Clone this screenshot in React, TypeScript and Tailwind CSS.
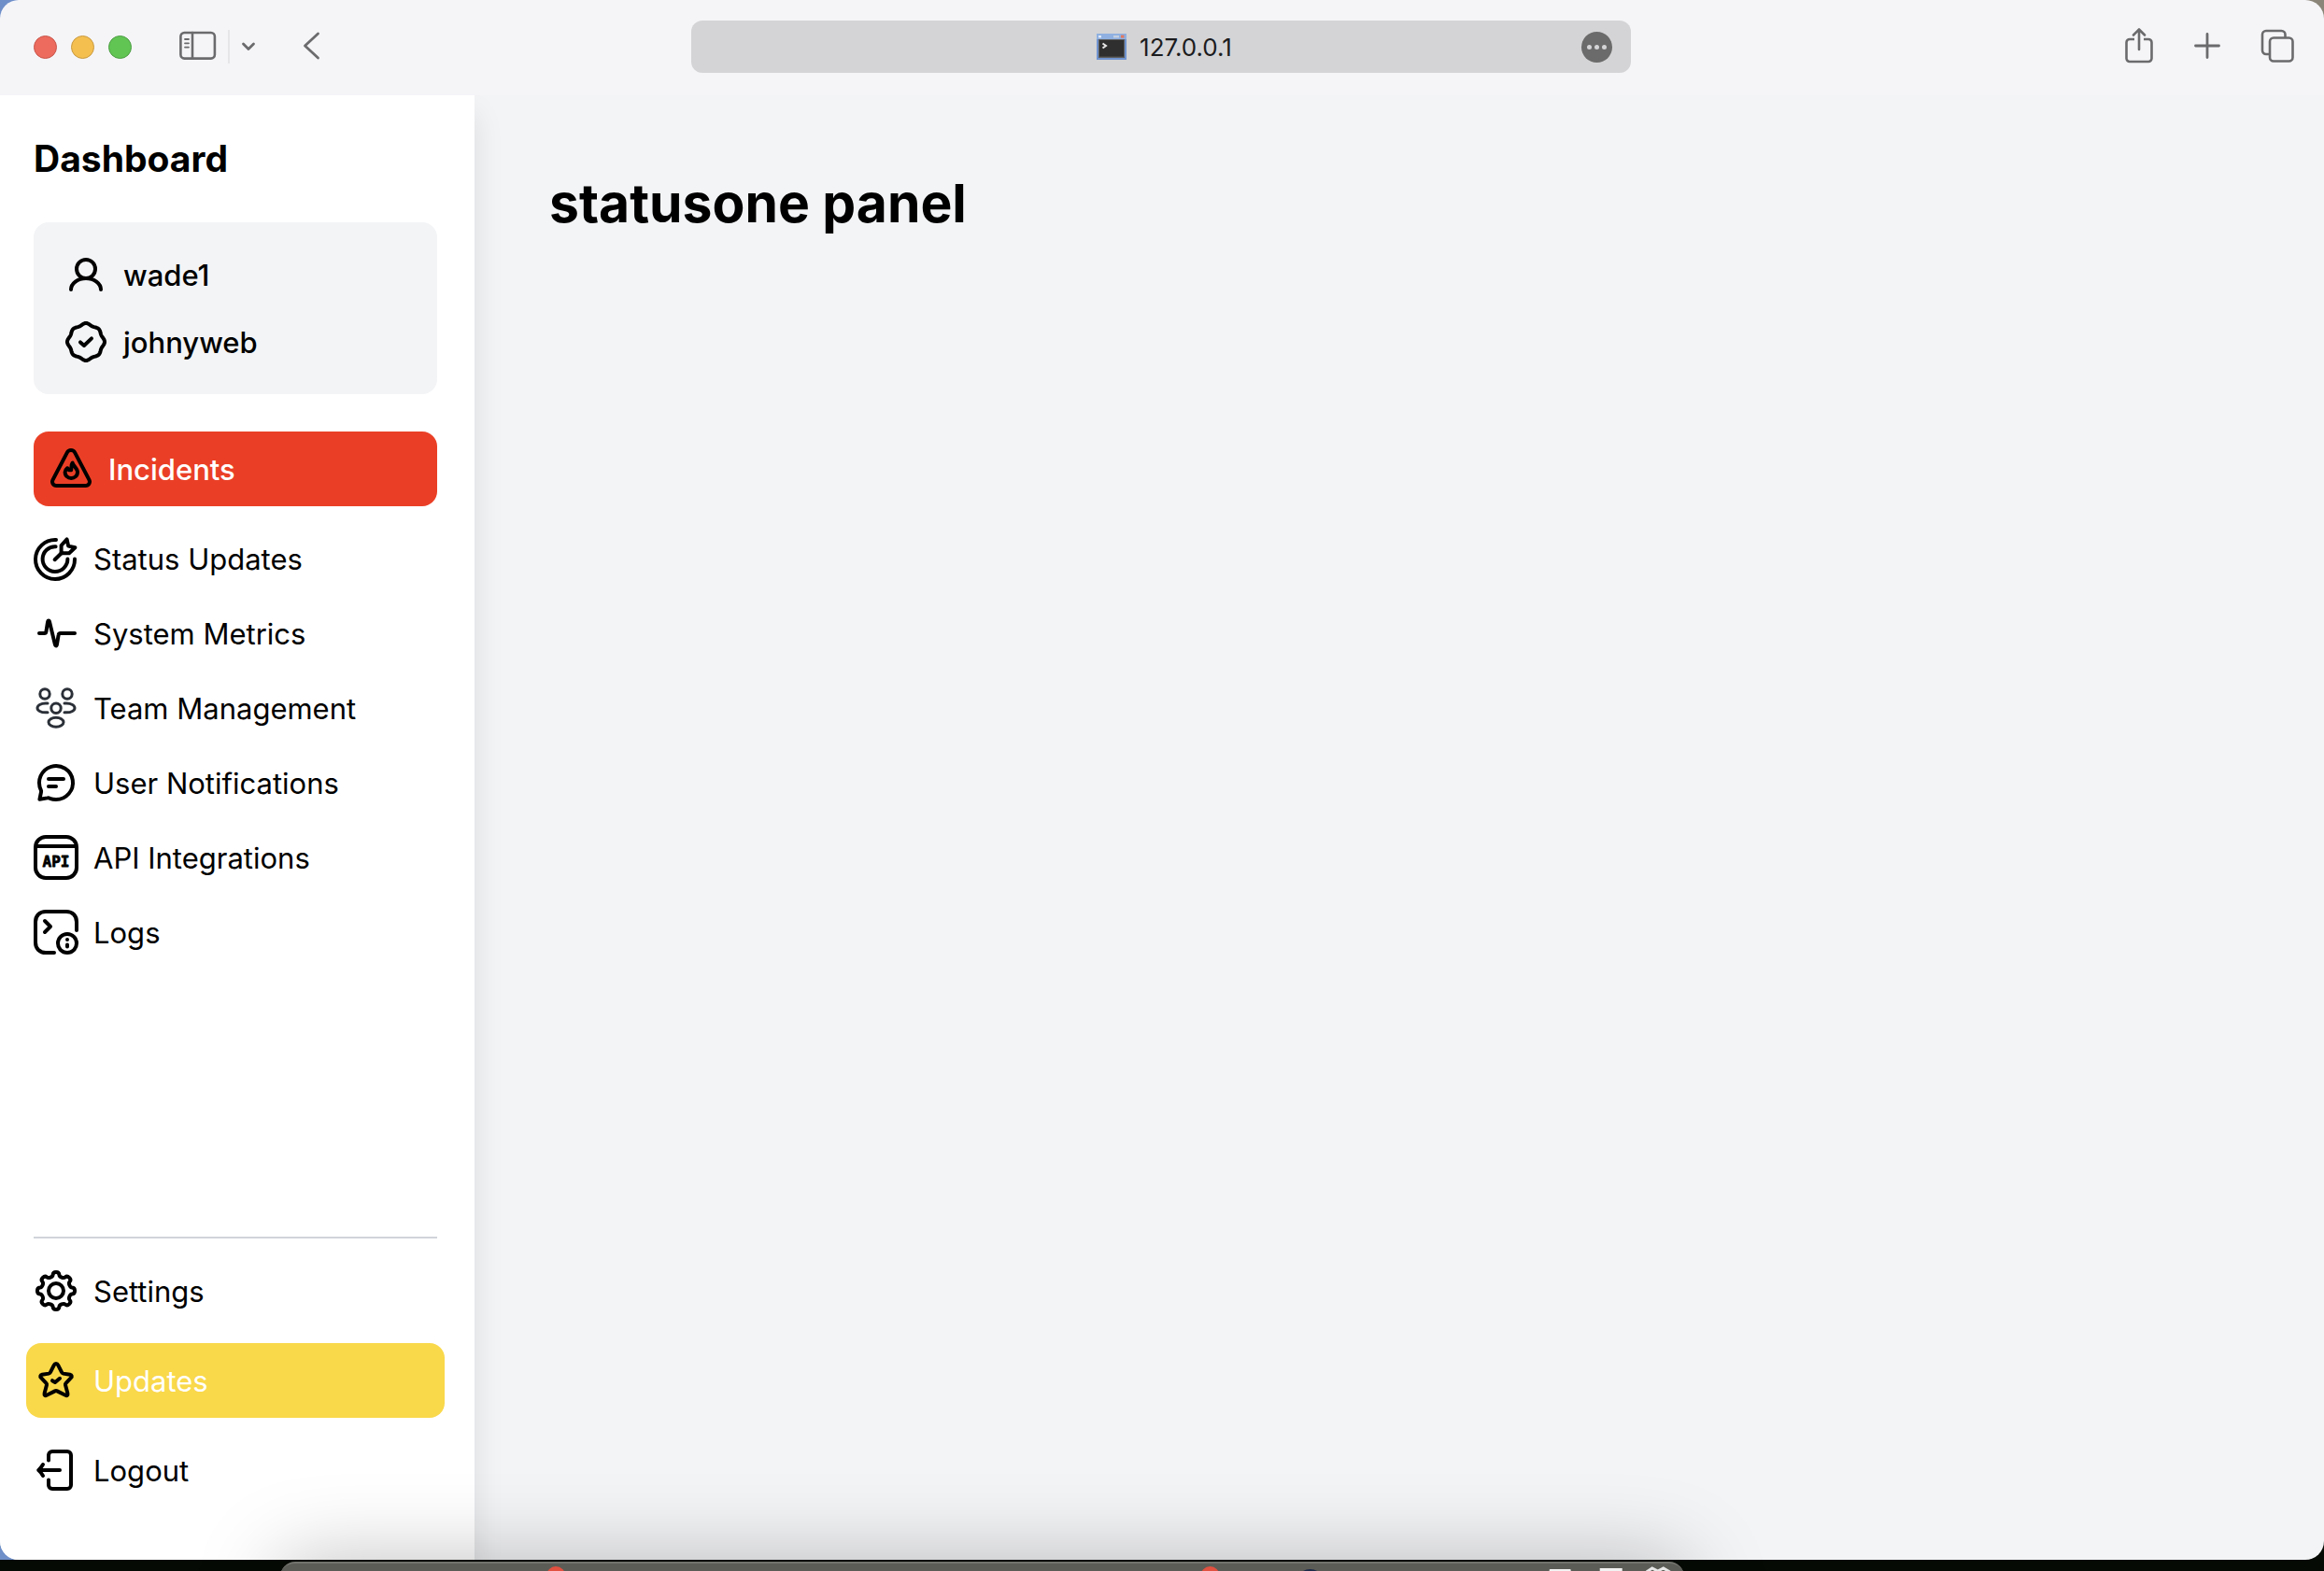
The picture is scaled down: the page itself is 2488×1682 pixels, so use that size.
import type { ReactNode } from "react";

/* ---------- icon helpers ---------- */

function Icon({ children, stroke = 2 }: { children: ReactNode; stroke?: number }) {
  return (
    <svg
      viewBox="0 0 24 24"
      className="size-12 shrink-0 overflow-visible"
      fill="none"
      stroke="currentColor"
      strokeWidth={stroke}
      strokeLinecap="round"
      strokeLinejoin="round"
      aria-hidden="true"
    >
      {children}
    </svg>
  );
}

/** Wavy badge outline with eight lobes around (12, 12). */
function badgePath() {
  const points: string[] = [];
  for (let i = 0; i < 160; i++) {
    const t = (i / 160) * Math.PI * 2;
    const r = 9.4 + 0.45 * Math.cos(8 * t) + 0.15 * Math.cos(4 * t);
    points.push(`${(12 + r * Math.sin(t)).toFixed(2)} ${(12 - r * Math.cos(t)).toFixed(2)}`);
  }
  return `M${points.join("L")}Z`;
}

/** Gear outline with eight rounded teeth around (12, 12). */
function gearPath() {
  const at = (k: number, u: number, v: number) => {
    const a = (k * Math.PI) / 4;
    const x = 12 + u * Math.cos(a) + v * Math.sin(a);
    const y = 12 + u * Math.sin(a) - v * Math.cos(a);
    return `${x.toFixed(2)} ${y.toFixed(2)}`;
  };
  let d = `M${at(0, -1.7, 8.6)}`;
  for (let k = 0; k < 8; k++) {
    d += `C${at(k, -1.6, 10.5)} ${at(k, 1.6, 10.5)} ${at(k, 1.7, 8.6)}`;
    d += `C${at(k, 1.8, 7.4)} ${at(k + 1, -1.8, 7.4)} ${at(k + 1, -1.7, 8.6)}`;
  }
  return `${d}Z`;
}

const BADGE = badgePath();
const GEAR = gearPath();

const UserIcon = () => (
  <Icon>
    <circle cx="12" cy="9" r="5" />
    <path d="M20 20C20 16.7 16.4 14 12 14S4 16.7 4 20" />
  </Icon>
);

const BadgeIcon = () => (
  <Icon>
    <path d={BADGE} />
    <path d="M9 12.2L11 14L15 10.2" />
  </Icon>
);

const IncidentIcon = () => (
  <Icon>
    <path d="M9.9 3.3C10.8 1.6 13.2 1.6 14.1 3.3L21.7 17.8C22.5 19.3 21.5 21 19.8 21H4.2C2.5 21 1.5 19.3 2.3 17.8Z" />
    <path d="M10.1 11.6C9.2 12.3 8.8 13 8.8 13.8C8.8 15.6 10.3 17 12.1 17C14 17 15.5 15.6 15.5 13.8C15.5 11.8 13.4 10.6 12.8 8.8C12.1 9.7 12.3 11.2 12.1 12.6C11 12.8 10.4 12.4 10.1 11.6Z" />
  </Icon>
);

const TargetIcon = () => (
  <Icon>
    <path d="M12 2A10.5 10.5 0 1 0 22 12.3" />
    <path d="M11.8 5.6A6.7 6.7 0 1 0 18.2 12.3" />
    <path d="M11.3 12.6L15 9" />
    <path d="M14.8 9.1V5L17.8 1.7L18.6 5.3L22.2 6.1L19 9.1Z" />
  </Icon>
);

const PulseIcon = () => (
  <Icon>
    <path d="M3 12H5.8C6.3 12 6.6 11.7 6.7 11.2L7.5 6.2C7.7 5 8.3 5 8.6 6.2L11.4 17.8C11.7 19 12.3 19 12.5 17.8L13.3 13C13.4 12.3 13.8 12 14.4 12H22" />
  </Icon>
);

const TeamIcon = () => (
  <svg
    viewBox="0 0 24 24"
    className="size-12 shrink-0 text-[#2b3038]"
    fill="none"
    stroke="currentColor"
    strokeWidth="1.5"
    strokeLinecap="round"
    aria-hidden="true"
  >
    <circle cx="6" cy="4.500" r="2.600" />
    <circle cx="18" cy="4.500" r="2.600" />
    <circle cx="12" cy="12.100" r="2.600" />
    <ellipse cx="12" cy="19.600" rx="4" ry="2.500" />
    <path d="M7.500 9.500H6.400C3.900 9.500 2 10.600 2 12S3.900 14.400 6.400 14.400H7.500" />
    <path d="M16.500 9.500H17.600C20.100 9.500 22 10.600 22 12S20.100 14.400 17.600 14.400H16.500" />
  </svg>
);

const ChatIcon = () => (
  <Icon>
    <path d="M12 21A9 9 0 1 0 3.9 15.9C4.1 16.3 4.1 16.7 4 17.1L3.2 20.9L7.4 20.2C7.9 20.1 8.3 20.2 8.7 20.4C9.7 20.8 10.8 21 12 21Z" />
    <path d="M8 10H16M8 14H12" />
  </Icon>
);

const ApiIcon = () => (
  <Icon>
    <rect x="1" y="1" width="22" height="22" rx="5.5" />
    <path d="M1.5 6H22.5" />
    <text
      x="12"
      y="17"
      textAnchor="middle"
      fill="currentColor"
      stroke="currentColor"
      strokeWidth="0.4"
      className="text-[8px] font-bold font-['DejaVu_Sans_Mono',monospace]"
    >
      API
    </text>
  </Icon>
);

const LogsIcon = () => (
  <Icon>
    <path d="M23 11V6.5C23 3.2 20.8 1 17.5 1H6.5C3.2 1 1 3.2 1 6.5V17.5C1 20.8 3.2 23 6.5 23H11" />
    <path d="M6 6L9 9L6 12" />
    <circle cx="18" cy="18" r="5" />
    <path d="M18 16H18.01M18 18.8V19.8" />
  </Icon>
);

const GearIcon = () => (
  <Icon>
    <path d={GEAR} />
    <circle cx="12" cy="12" r="4" />
  </Icon>
);

const StarIcon = () => (
  <Icon>
    <path d="M10.9 3.8C11.4 2.8 12.6 2.8 13.1 3.8L15 7.6C15.2 8 15.5 8.2 15.9 8.3L19.5 8.9C20.4 9.1 20.7 9.9 20 10.6L17.3 13.4C17 13.7 16.9 14 17 14.4L18.2 18.9C18.4 19.9 17.8 20.3 17 19.9L12.6 17.7C12.2 17.5 11.8 17.5 11.4 17.7L7 19.9C6.2 20.3 5.6 19.9 5.8 18.9L7 14.4C7.1 14 7 13.7 6.7 13.4L4 10.6C3.3 9.9 3.6 9.1 4.5 8.9L8.1 8.3C8.5 8.2 8.8 8 9 7.6Z" />
    <path d="M10 12.1L11.5 13L14 10.9" />
  </Icon>
);

const LogoutIcon = () => (
  <Icon>
    <path d="M8 6.8V4A2 2 0 0 1 10 2H18A2 2 0 0 1 20 4V20A2 2 0 0 1 18 22H10A2 2 0 0 1 8 20V17.2" />
    <path d="M14 12H3M5 9C4.4 10 3.6 11.2 2.6 12C3.6 12.8 4.4 14 5 15" />
  </Icon>
);

/* ---------- browser toolbar ---------- */

function Toolbar() {
  return (
    <header className="grid h-[102px] shrink-0 grid-cols-[1fr_minmax(0,1006px)_1fr] items-center bg-[#f5f5f8] pr-0.5 pb-0.5 text-[#6b6b6d]">
      <div className="flex items-center pl-9">
        <div className="flex gap-[15px]">
          <button aria-label="Close" className="size-[25px] rounded-full border border-[#c9564b] bg-[#ec6a5e]" />
          <button aria-label="Minimize" className="size-[25px] rounded-full border border-[#c99a40] bg-[#f4bf4f]" />
          <button aria-label="Zoom" className="size-[25px] rounded-full border border-[#4c9d42] bg-[#61c554]" />
        </div>
        <button aria-label="Show sidebar" className="ml-[51px] pb-0.5">
          <svg viewBox="0 0 40 32" className="h-8 w-10" fill="none" stroke="currentColor" strokeWidth="2.6" strokeLinecap="round">
            <rect x="1.4" y="2" width="36.5" height="27.6" rx="4" />
            <path d="M14 2V29.6" />
            <path d="M6 9H10M6 13.3H10M6 17.6H10" strokeWidth="1.8" />
          </svg>
        </button>
        <span className="ml-3 h-9 w-0.5 bg-[#e6e6e9]" />
        <button aria-label="Tab groups" className="ml-3">
          <svg viewBox="0 0 16 12" className="h-3 w-4" fill="none" stroke="currentColor" strokeWidth="2.8" strokeLinecap="round" strokeLinejoin="round">
            <path d="M2.5 3L8 8.6L13.5 3" />
          </svg>
        </button>
        <button aria-label="Back" className="ml-[49px] pb-0.5">
          <svg viewBox="0 0 24 32" className="h-8 w-6" fill="none" stroke="currentColor" strokeWidth="2.8" strokeLinecap="round" strokeLinejoin="round">
            <path d="M17.5 3L3.5 16L17.5 29" />
          </svg>
        </button>
      </div>

      <div className="flex h-14 items-center rounded-xl bg-[#d4d4d6] px-5">
        <span className="w-10" />
        <div className="flex flex-1 items-center justify-center gap-[14px]">
          <svg viewBox="0 0 32 28" className="h-7 w-8" aria-hidden="true">
            <rect width="32" height="28" fill="#6f93cf" />
            <rect x="0" y="0" width="32" height="6" fill="#8fb0e0" />
            <rect x="2" y="2" width="3" height="2.4" fill="#dfeaf8" />
            <rect x="18" y="2" width="6" height="2.4" fill="#c4cfe0" />
            <rect x="26" y="1.6" width="3.4" height="3" fill="#e2795f" />
            <rect x="2" y="6" width="28" height="20" fill="#5d5d5d" />
            <rect x="3" y="7" width="26" height="17.6" fill="#2f2f2f" />
            <path d="M6.5 10.5L10 13L6.5 15.5" fill="none" stroke="#e8e8e8" strokeWidth="2" />
          </svg>
          <span className="pt-0.5 text-[26px] leading-8 text-[#1c1c1e]">127.0.0.1</span>
        </div>
        <button aria-label="Page menu" className="flex size-[33px] items-center justify-center gap-[3px] rounded-full bg-[#6b6b6b]">
          <span className="size-[5px] rounded-full bg-[#d4d4d6]" />
          <span className="size-[5px] rounded-full bg-[#d4d4d6]" />
          <span className="size-[5px] rounded-full bg-[#d4d4d6]" />
        </button>
      </div>

      <div className="flex items-center justify-end gap-[41px] pr-[30px] pb-0.5">
        <button aria-label="Share">
          <svg viewBox="0 0 32 40" className="h-10 w-8" fill="none" stroke="currentColor" strokeWidth="2.6" strokeLinecap="round" strokeLinejoin="round">
            <path d="M11 13H6A3.5 3.5 0 0 0 2.5 16.5V33.5A3.5 3.5 0 0 0 6 37H26A3.5 3.5 0 0 0 29.5 33.5V16.5A3.5 3.5 0 0 0 26 13H21" strokeLinecap="butt" />
            <path d="M16 24V2.5M10 8.5L16 2.5L22 8.5" />
          </svg>
        </button>
        <button aria-label="New tab">
          <svg viewBox="0 0 32 32" className="size-8" fill="none" stroke="currentColor" strokeWidth="2.8" strokeLinecap="round">
            <path d="M16 3.5V28.5M3.5 16H28.5" />
          </svg>
        </button>
        <button aria-label="Show all tabs">
          <svg viewBox="0 0 36 36" className="size-9" fill="none" stroke="currentColor" strokeWidth="2.6">
            <rect x="10" y="9.5" width="24.5" height="25" rx="4" />
            <path d="M10 27H6A4 4 0 0 1 2 23V6A4 4 0 0 1 6 2H22.5A4 4 0 0 1 26.5 6V9.5" />
          </svg>
        </button>
      </div>
    </header>
  );
}

/* ---------- sidebar ---------- */

function NavLink({ icon, label }: { icon: ReactNode; label: string }) {
  return (
    <a href="#" className="flex items-center gap-4">
      {icon}
      <span className="pt-0.5">{label}</span>
    </a>
  );
}

function Sidebar() {
  return (
    <aside className="z-10 flex w-[508px] shrink-0 flex-col bg-white pt-10 pr-10 pb-[72px] pl-9 text-[31px] leading-10 text-black shadow-[0_20px_30px_rgba(0,0,0,0.1)]">
      <h2 className="text-[39px] leading-[56px] font-bold">Dashboard</h2>

      <div className="mt-10 flex flex-col gap-6 rounded-2xl bg-gray-100 p-8 font-medium">
        <div className="flex items-center gap-4">
          <UserIcon />
          <span className="pt-0.5">wade1</span>
        </div>
        <div className="flex items-center gap-4">
          <BadgeIcon />
          <span className="pt-0.5">johnyweb</span>
        </div>
      </div>

      <nav className="mt-10 flex flex-col gap-8" aria-label="Main">
        <a href="#" className="flex items-center gap-4 rounded-2xl bg-[#ea3f26] p-4 font-medium text-white">
          <span className="text-black">
            <IncidentIcon />
          </span>
          <span className="pt-0.5">Incidents</span>
        </a>
        <NavLink icon={<TargetIcon />} label="Status Updates" />
        <NavLink icon={<PulseIcon />} label="System Metrics" />
        <NavLink icon={<TeamIcon />} label="Team Management" />
        <NavLink icon={<ChatIcon />} label="User Notifications" />
        <NavLink icon={<ApiIcon />} label="API Integrations" />
        <NavLink icon={<LogsIcon />} label="Logs" />
      </nav>

      <nav className="mt-auto flex flex-col gap-8 border-t-2 border-[#d1d5da] pt-8" aria-label="Account">
        <NavLink icon={<GearIcon />} label="Settings" />
        <a href="#" className="-mx-2 flex items-center gap-4 rounded-2xl bg-[#f9d84a] px-2 py-4 text-white">
          <span className="text-black">
            <StarIcon />
          </span>
          <span className="pt-0.5">Updates</span>
        </a>
        <NavLink icon={<LogoutIcon />} label="Logout" />
      </nav>
    </aside>
  );
}

/* ---------- dock peeking in at the bottom edge ---------- */

function Dock() {
  return (
    <div className="absolute top-full left-[12.05%] z-20 -mt-2.5 h-24 w-[60.4%] rounded-2xl border-t-2 border-[#73736d] bg-[#5c5c56] shadow-[0_0_90px_rgba(0,0,0,0.26)]">
      <svg viewBox="0 0 1502 20" className="h-5 w-full" preserveAspectRatio="none" aria-hidden="true">
        <circle cx="295" cy="13" r="10" fill="#e2503f" />
        <circle cx="995" cy="13" r="10" fill="#e2503f" />
        <circle cx="1102" cy="21" r="15" fill="#1d2b4a" />
        <rect x="1358" y="6" width="23" height="14" rx="1" fill="#f2f2f2" />
        <rect x="1412" y="5" width="24" height="15" fill="#f2f2f2" />
        <path d="M1462 9L1468 5L1474 8L1480 5L1487 9" fill="none" stroke="#e8e8e8" strokeWidth="3" />
      </svg>
    </div>
  );
}

export default function App() {
  return (
    <div className="relative flex h-screen flex-col overflow-hidden bg-[#060a04] font-['Inter',sans-serif]">
      <div className="flex min-h-0 flex-1 bg-[conic-gradient(#8a8578_25%,#060a04_25%_50%,#6f8fc9_50%)]">
        <div className="flex min-w-0 flex-1 flex-col overflow-hidden rounded-[20px]">
          <Toolbar />
          <div className="flex min-h-0 flex-1 overflow-hidden bg-gray-100">
            <Sidebar />
            <main className="min-w-0 flex-1 px-20 pt-20">
              <h1 className="text-[57px] leading-[72px] font-bold text-black">statusone panel</h1>
            </main>
          </div>
        </div>
      </div>
      <div className="h-3 shrink-0" />
      <Dock />
    </div>
  );
}
